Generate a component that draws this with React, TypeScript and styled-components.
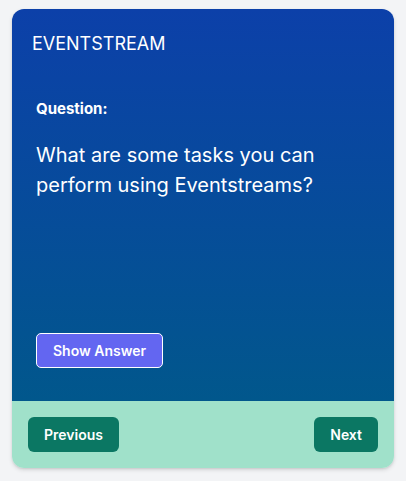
import React, {FC, useState} from 'react';
import styled, {createGlobalStyle} from 'styled-components';

const GlobalStyle = createGlobalStyle`
    * {
        box-sizing: border-box;
    }
    body {
        margin: 0;
        background: #f3f4f6;
        font-family: Inter, "Noto Sans", sans-serif;
        -webkit-font-smoothing: antialiased;
    }
`;

const QUESTION = 'What are some tasks you can perform using Eventstreams?';

/** Карточка с вопросом */
const App: FC = () => {
    const [showAnswer, setShowAnswer] = useState(false);

    return (
        <Page>
            <GlobalStyle />
            <Card>
                <Main>
                    <Header>EVENTSTREAM</Header>
                    <Body>
                        <Label>Question:</Label>
                        <QuestionText>{QUESTION}</QuestionText>
                        <Spacer />
                        <ShowAnswerButton onClick={() => setShowAnswer(!showAnswer)}>Show Answer</ShowAnswerButton>
                    </Body>
                </Main>
                <Footer>
                    <NavButton>Previous</NavButton>
                    <NavButton>Next</NavButton>
                </Footer>
            </Card>
        </Page>
    );
};

export default App;

const Page = styled.div`
    padding: 9px 12px 13px;
`;

const Card = styled.div`
    display: flex;
    flex-direction: column;
    height: 459px;
    border-radius: 12px;
    overflow: hidden;
    box-shadow: 0 2px 4px rgba(0, 0, 0, 0.12), 0 1px 2px rgba(0, 0, 0, 0.08);
`;

const Main = styled.div`
    flex: 1;
    display: flex;
    flex-direction: column;
    background: linear-gradient(to bottom, #0c40a9, #01578c);
    color: #ffffff;
`;

const Header = styled.div`
    padding: 21px 20px 0;
    font-size: 18px;
    line-height: 28px;
`;

const Body = styled.div`
    flex: 1;
    display: flex;
    flex-direction: column;
    align-items: flex-start;
    padding: 41px 24px 33px;
`;

const Label = styled.div`
    font-size: 15px;
    font-weight: 700;
    line-height: 20px;
`;

const QuestionText = styled.div`
    margin-top: 21px;
    font-size: 20px;
    line-height: 30px;
`;

const Spacer = styled.div`
    flex: 1;
`;

const ShowAnswerButton = styled.button`
    height: 35px;
    padding: 0 16px;
    border: 1px solid #ffffff;
    border-radius: 5px;
    background: #6366f1;
    color: #ffffff;
    font-family: inherit;
    font-size: 14px;
    font-weight: 600;
    cursor: pointer;
`;

const Footer = styled.div`
    display: flex;
    justify-content: space-between;
    padding: 16px;
    background: #a0e1ca;
`;

const NavButton = styled.button`
    height: 35px;
    padding: 0 16px;
    border: none;
    border-radius: 6px;
    background: #0b7763;
    color: #ffffff;
    font-family: inherit;
    font-size: 14px;
    font-weight: 600;
    cursor: pointer;
`;
